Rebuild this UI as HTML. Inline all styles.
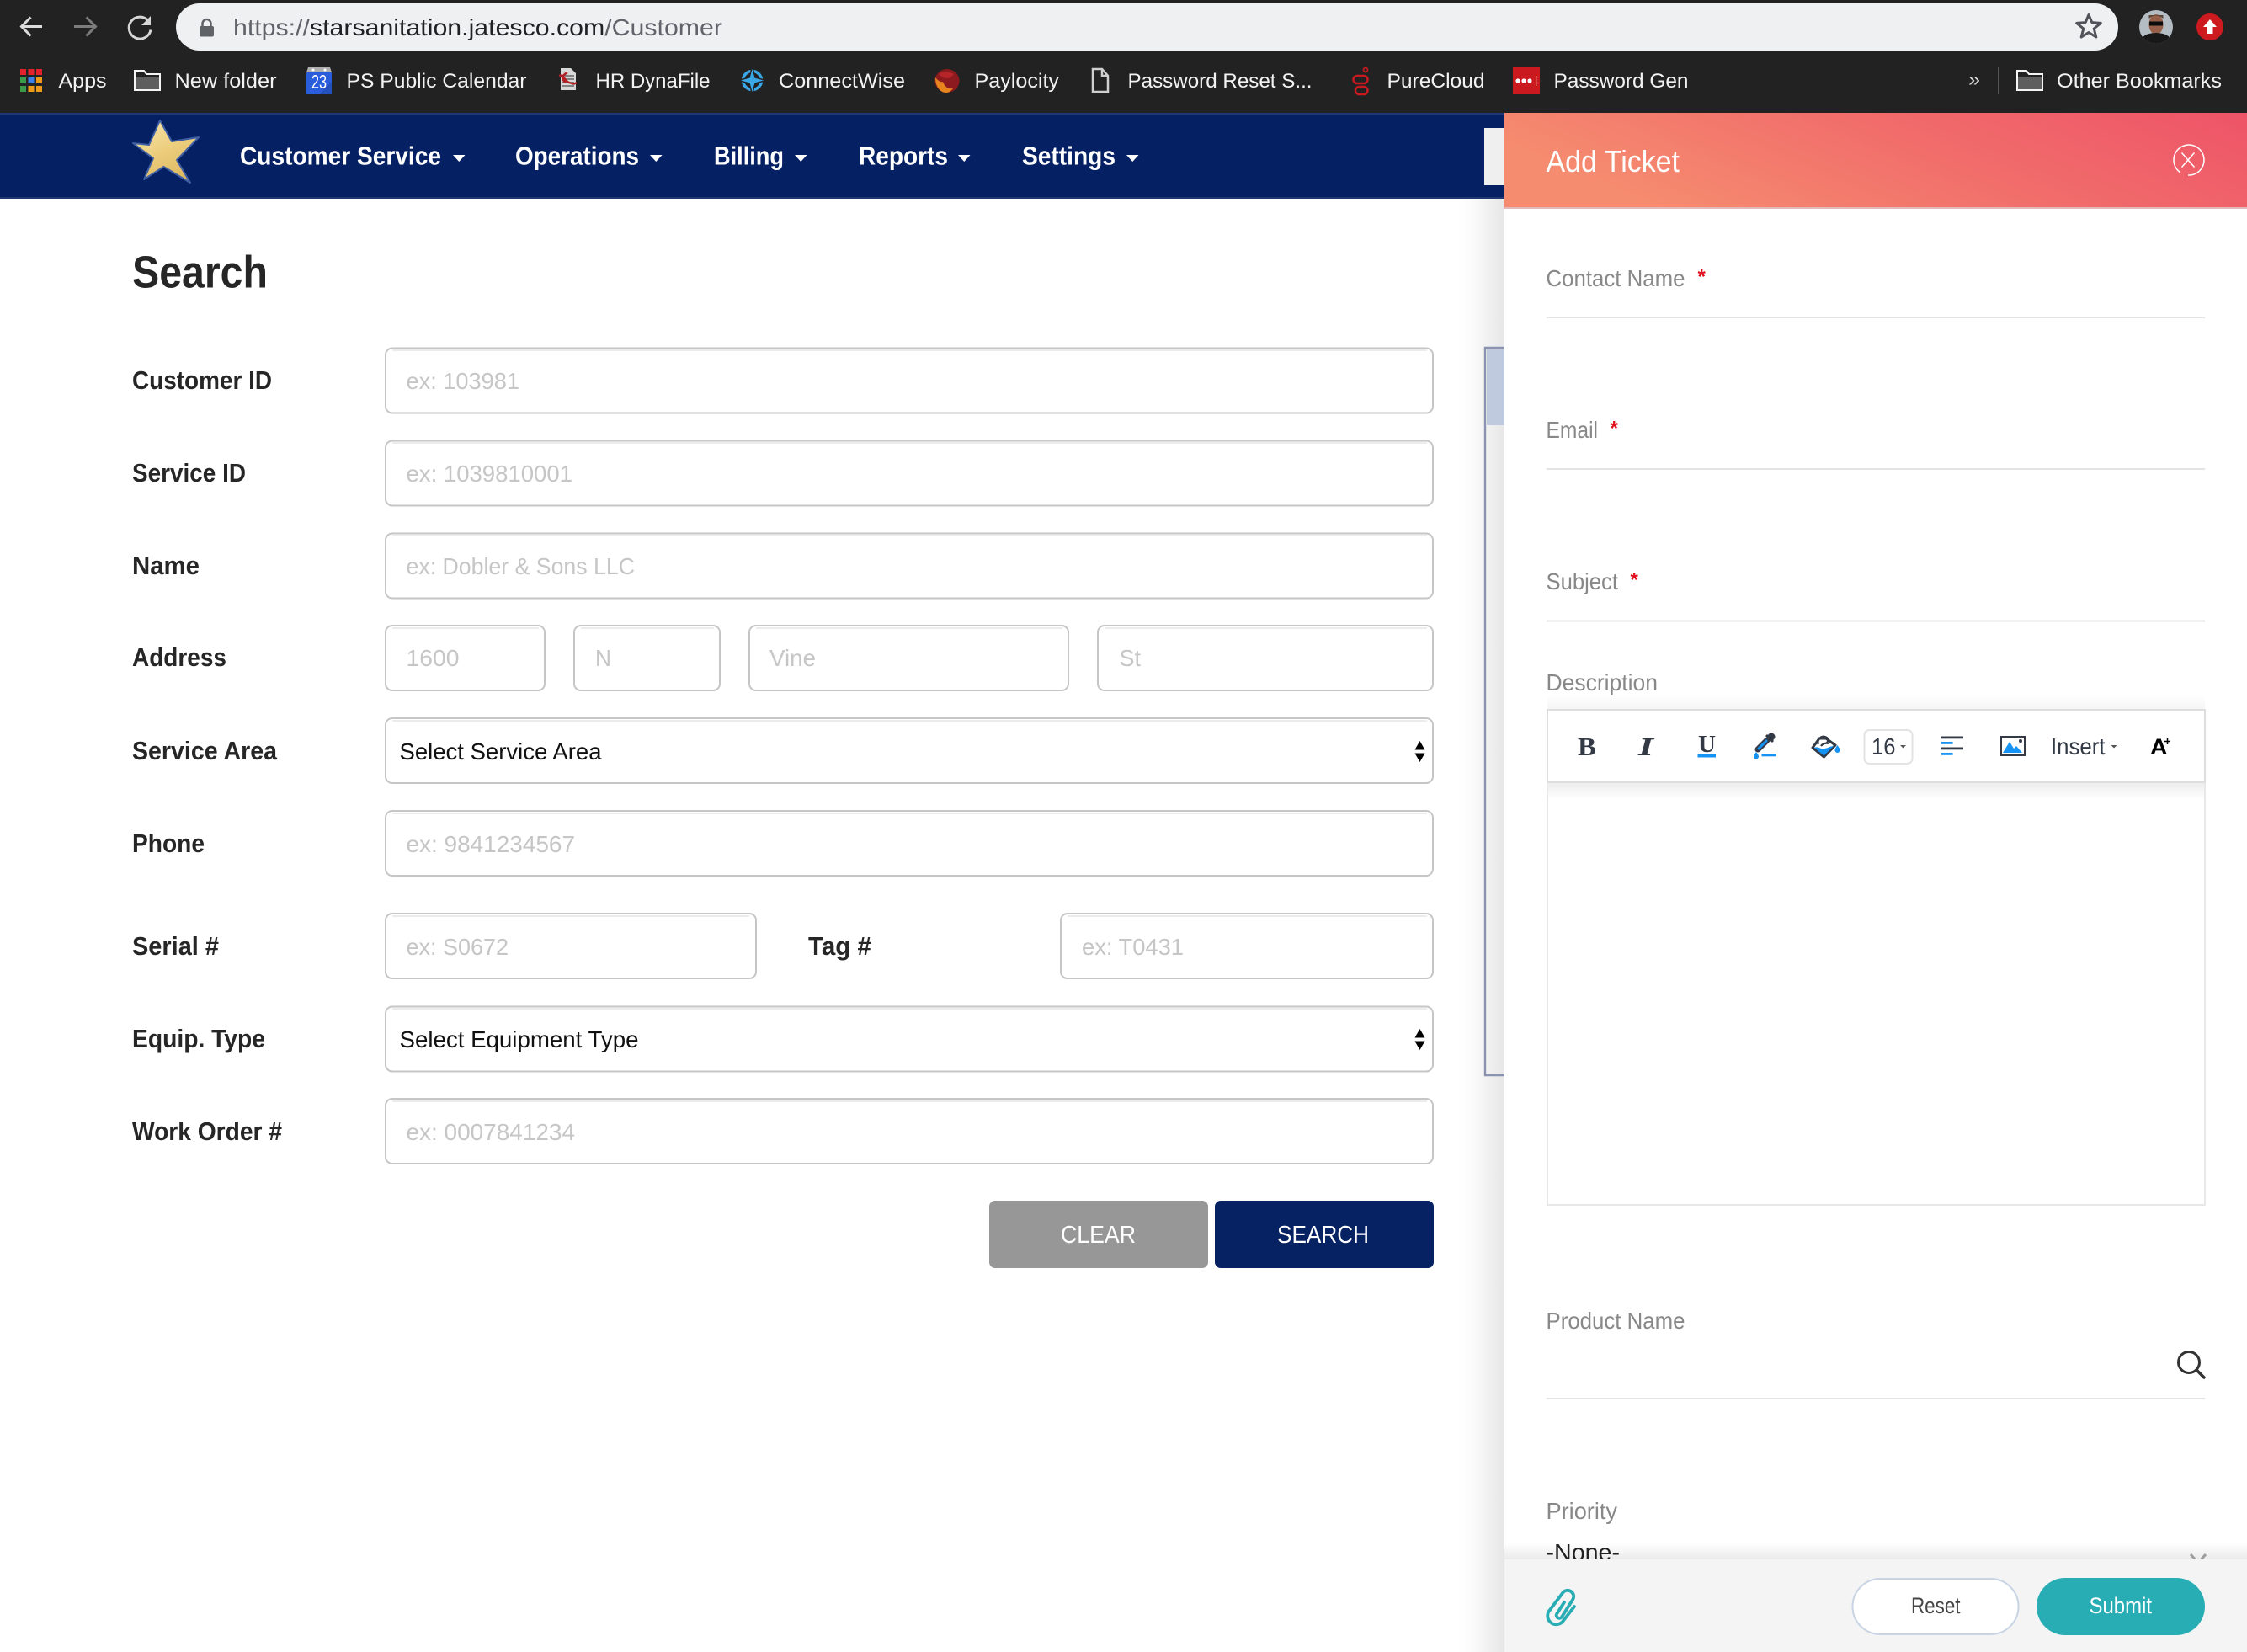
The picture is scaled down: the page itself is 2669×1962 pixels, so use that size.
<!DOCTYPE html>
<html lang="en">
<head>
<meta charset="utf-8">
<title>Search</title>
<style>
html,body{margin:0;padding:0;width:2669px;height:1962px;overflow:hidden;background:#fff}
svg{display:block}
text{font-family:"Liberation Sans",sans-serif;white-space:pre}
.bm{font-size:24px;fill:#f2f2f2}
.nav{font-size:31px;font-weight:700;fill:#fff}
.lbl{font-size:31px;font-weight:700;fill:#262626}
.ph{font-size:28px;fill:#c6c6c6}
.sel{font-size:28px;fill:#111}
.btn{font-size:29px;fill:#fff}
.pl{font-size:28px;fill:#888}
.ast{font-size:24px;font-weight:700;fill:#e0101c}
.box{fill:#fff;stroke:#c6c6c6;stroke-width:2}
.ish{stroke:#ececec;stroke-width:2}
.ul{fill:#e3e3e3}
</style>
</head>
<body>
<svg xmlns="http://www.w3.org/2000/svg" width="2669" height="1962" viewBox="0 0 2669 1962">
<defs>
<linearGradient id="sh" x1="0" x2="1" y1="0" y2="0"><stop offset="0" stop-color="#fff"/><stop offset="0.3" stop-color="#fbfbfb"/><stop offset="1" stop-color="#e6e6e6"/></linearGradient>
<linearGradient id="hd" x1="0" x2="1" y1="0.3" y2="0"><stop offset="0" stop-color="#f58b6f"/><stop offset="0.5" stop-color="#f16d6b"/><stop offset="1" stop-color="#ee5468"/></linearGradient>
<linearGradient id="gold" x1="0.2" x2="0.7" y1="0" y2="1"><stop offset="0" stop-color="#f5e3a8"/><stop offset="0.5" stop-color="#eccd7c"/><stop offset="1" stop-color="#dcb860"/></linearGradient>
<linearGradient id="fs" x1="0" x2="0" y1="0" y2="1"><stop offset="0" stop-color="#000" stop-opacity="0"/><stop offset="1" stop-color="#000" stop-opacity="0.08"/></linearGradient>
<linearGradient id="ts" x1="0" x2="0" y1="0" y2="1"><stop offset="0" stop-color="#000" stop-opacity="0.07"/><stop offset="1" stop-color="#000" stop-opacity="0"/></linearGradient>
<clipPath id="av"><circle cx="2561" cy="32" r="20"/></clipPath>
</defs>

<!-- browser chrome -->
<rect width="2669" height="134" fill="#222"/>
<rect x="209" y="4" width="2307" height="56" rx="28" fill="#eff0f2"/>
<path d="M50 31.500H26M36.500 20.500L25.500 31.500l11 11" fill="none" stroke="#dcdcdc" stroke-width="3"/>
<path d="M88 31.500h25M102.500 20.500l11 11-11 11" fill="none" stroke="#7c7c7c" stroke-width="3"/>
<path d="M176 24.500a13 13 0 1 0 3 11" fill="none" stroke="#d6d6d6" stroke-width="3"/>
<path d="M179 19v11h-11z" fill="#d6d6d6"/>
<rect x="237" y="31" width="17" height="12.500" rx="2" fill="#5f6368"/>
<path d="M240.500 32v-4a5 5 0 0 1 10 0v4" fill="none" stroke="#5f6368" stroke-width="2.500"/>
<text x="277" y="42" font-size="28" textLength="581" lengthAdjust="spacingAndGlyphs" fill="#60646a">https://<tspan fill="#202124">starsanitation.jatesco.com</tspan>/Customer</text>
<polygon points="2481,17.500 2484.800,26.600 2495.300,27.400 2487.200,34 2489.800,44 2481,38.500 2472.200,44 2474.800,34 2466.700,27.400 2477.200,26.600" fill="none" stroke="#50545a" stroke-width="3" stroke-linejoin="round"/>
<g clip-path="url(#av)">
<rect x="2541" y="12" width="40" height="40" fill="#b4bcc4"/>
<ellipse cx="2561" cy="29" rx="8.500" ry="12" fill="#96604a"/>
<rect x="2553" y="25.500" width="16" height="5" fill="#0c0c0c"/>
<path d="M2552.500 22q8.500-7 17 0v-4h-17z" fill="#5a4636"/>
<path d="M2541 52q3-13 20-13t20 13z" fill="#181818"/>
</g>
<circle cx="2625" cy="32" r="16" fill="#cc1a1f"/>
<path d="M2625 23l8 9h-4.500v8h-7v-8H2617z" fill="#fff"/>

<!-- bookmarks -->
<g>
<rect x="24" y="82" width="7" height="7" fill="#e5222a"/><rect x="33.500" y="82" width="7" height="7" fill="#e5222a"/><rect x="43" y="82" width="7" height="7" fill="#e5222a"/>
<rect x="24" y="92" width="7" height="7" fill="#3c9a48"/><rect x="33.500" y="92" width="7" height="7" fill="#3b7fe8"/><rect x="43" y="92" width="7" height="7" fill="#f09a1a"/>
<rect x="24" y="102" width="7" height="7" fill="#3c9a48"/><rect x="33.500" y="102" width="7" height="7" fill="#f09a1a"/><rect x="43" y="102" width="7" height="7" fill="#f09a1a"/>
</g>
<text class="bm" x="69.500" y="104" textLength="57" lengthAdjust="spacingAndGlyphs">Apps</text>
<path d="M160 107V84h11l3 4h16v19z" fill="#222" stroke="#f4f4f4" stroke-width="2"/><rect x="161" y="92" width="28" height="14" fill="#5e5e5e"/>
<text class="bm" x="207.500" y="104" textLength="121" lengthAdjust="spacingAndGlyphs">New folder</text>
<rect x="364" y="86" width="30" height="26" rx="1" fill="#2a5ddc"/><path d="M379 112h15V97z" fill="#2450bd"/><path d="M366 80h26l2 6h-30z" fill="#b0b0b0"/><circle cx="372" cy="83" r="1.500" fill="#fff"/><circle cx="386" cy="83" r="1.500" fill="#fff"/>
<text x="370" y="105" font-size="23" fill="#fff" textLength="18" lengthAdjust="spacingAndGlyphs">23</text>
<text class="bm" x="411.500" y="104" textLength="214" lengthAdjust="spacingAndGlyphs">PS Public Calendar</text>
<path d="M666 81h12l6 6v20h-18z" fill="#d8d8d8"/><path d="M668 90h14M668 94h14M668 98h14M668 102h14" stroke="#666" stroke-width="1.500"/><path d="M664 90c6-2 6 6 12 8s6 2 9 0M674 86c-7 4-8 8-2 12" fill="none" stroke="#b02024" stroke-width="2.500"/>
<text class="bm" x="707.500" y="104" textLength="136" lengthAdjust="spacingAndGlyphs">HR DynaFile</text>
<circle cx="893.500" cy="95.500" r="11" fill="none" stroke="#3aa7e6" stroke-width="3.500"/>
<polygon points="893.500,79 897,92 910,95.500 897,99 893.500,112 890,99 877,95.500 890,92" fill="#3aa7e6" stroke="#222" stroke-width="1.500"/>
<text class="bm" x="925" y="104" textLength="150" lengthAdjust="spacingAndGlyphs">ConnectWise</text>
<ellipse cx="1125" cy="96" rx="14.500" ry="14" fill="#8c1a1e"/><path d="M1111 92c0 10 5 18 13 18 3 0 6-2 8-5-6 1-10-2-12-8-2 1-6-1-9-5z" fill="#e8841e"/><path d="M1115 88q8-6 18 0-7 10-18 0z" fill="#b6252a"/>
<text class="bm" x="1157.500" y="104" textLength="100.500" lengthAdjust="spacingAndGlyphs">Paylocity</text>
<path d="M1298 82h11l7 8v19h-18zM1309 82v8h7" fill="none" stroke="#cfcfcf" stroke-width="2.500"/>
<text class="bm" x="1339.500" y="104" textLength="219" lengthAdjust="spacingAndGlyphs">Password Reset S...</text>
<circle cx="1622" cy="83" r="2.500" fill="none" stroke="#c8191f" stroke-width="1.800"/><rect x="1607.500" y="90" width="17" height="9" rx="4.500" fill="none" stroke="#c8191f" stroke-width="2.500"/><rect x="1610" y="103" width="14.500" height="9" rx="4.500" fill="none" stroke="#c8191f" stroke-width="2.500"/>
<text class="bm" x="1647.500" y="104" textLength="116" lengthAdjust="spacingAndGlyphs">PureCloud</text>
<rect x="1797" y="80" width="32" height="32" fill="#cb1a1f"/><circle cx="1803" cy="96" r="2.600" fill="#fff"/><circle cx="1810" cy="96" r="2.600" fill="#fff"/><circle cx="1817" cy="96" r="2.600" fill="#fff"/><rect x="1824" y="90" width="1.200" height="12" fill="#fff"/>
<text class="bm" x="1845.500" y="104" textLength="160" lengthAdjust="spacingAndGlyphs">Password Gen</text>
<text x="2338" y="102" font-size="24" fill="#d8d8d8" textLength="14" lengthAdjust="spacingAndGlyphs">»</text>
<rect x="2373" y="80" width="1.500" height="32" fill="#555"/>
<path d="M2396 107V84h11l3 4h16v19z" fill="#222" stroke="#f4f4f4" stroke-width="2"/><rect x="2397" y="92" width="28" height="14" fill="#5e5e5e"/>
<text class="bm" x="2443" y="104" textLength="196" lengthAdjust="spacingAndGlyphs">Other Bookmarks</text>

<!-- app nav -->
<rect y="134" width="1790" height="102" fill="#052163"/>
<rect y="134" width="1790" height="2" fill="#1f3875"/>
<rect y="234" width="1790" height="2" fill="#1f3875"/>
<polygon points="190,143 204,168 236,163 210,190 226,217 194.500,198 171,213 182,188 158,170 177,172" fill="url(#gold)" stroke="#3f5fa5" stroke-width="2" stroke-linejoin="round"/>
<text class="nav" x="285" y="195.500" textLength="239" lengthAdjust="spacingAndGlyphs">Customer Service</text>
<path d="M538 184h14.500l-7.250 8z" fill="#fff"/>
<text class="nav" x="612" y="195.500" textLength="147" lengthAdjust="spacingAndGlyphs">Operations</text>
<path d="M772 184h14.500l-7.250 8z" fill="#fff"/>
<text class="nav" x="848" y="195.500" textLength="83" lengthAdjust="spacingAndGlyphs">Billing</text>
<path d="M944 184h14.500l-7.250 8z" fill="#fff"/>
<text class="nav" x="1020" y="195.500" textLength="106" lengthAdjust="spacingAndGlyphs">Reports</text>
<path d="M1138 184h14.500l-7.250 8z" fill="#fff"/>
<text class="nav" x="1214" y="195.500" textLength="111" lengthAdjust="spacingAndGlyphs">Settings</text>
<path d="M1338 184h14.500l-7.250 8z" fill="#fff"/>

<!-- shadow behind panel -->
<rect x="1732" y="236" width="55" height="1726" fill="url(#sh)"/>
<rect x="1763" y="152" width="24" height="68" fill="#efefef"/>
<rect x="1766" y="415" width="21" height="90" fill="#c0cade"/>
<path d="M1787 413H1764V1277H1787" fill="none" stroke="#8a93b0" stroke-width="2.400"/>

<!-- search form -->
<text x="157" y="341.500" font-size="54" font-weight="700" fill="#262626" textLength="161" lengthAdjust="spacingAndGlyphs">Search</text>

<text class="lbl" x="157" y="462" textLength="166" lengthAdjust="spacingAndGlyphs">Customer ID</text>
<rect class="box" x="458" y="413.500" width="1244" height="77" rx="8"/><path class="ish" d="M466 416H1695"/>
<text class="ph" x="482.500" y="462" textLength="134.500" lengthAdjust="spacingAndGlyphs">ex: 103981</text>

<text class="lbl" x="157" y="572" textLength="135" lengthAdjust="spacingAndGlyphs">Service ID</text>
<rect class="box" x="458" y="523.500" width="1244" height="77" rx="8"/><path class="ish" d="M466 526H1695"/>
<text class="ph" x="482.500" y="572" textLength="197.500" lengthAdjust="spacingAndGlyphs">ex: 1039810001</text>

<text class="lbl" x="157" y="682" textLength="80" lengthAdjust="spacingAndGlyphs">Name</text>
<rect class="box" x="458" y="633.500" width="1244" height="77" rx="8"/><path class="ish" d="M466 636H1695"/>
<text class="ph" x="482.500" y="682" textLength="271.500" lengthAdjust="spacingAndGlyphs">ex: Dobler &amp; Sons LLC</text>

<text class="lbl" x="157" y="791" textLength="112" lengthAdjust="spacingAndGlyphs">Address</text>
<rect class="box" x="458" y="743" width="189" height="77" rx="8"/><path class="ish" d="M466 746H640"/>
<text class="ph" x="482.500" y="791" textLength="63" lengthAdjust="spacingAndGlyphs">1600</text>
<rect class="box" x="682" y="743" width="173" height="77" rx="8"/><path class="ish" d="M690 746H848"/>
<text class="ph" x="707" y="791" textLength="19" lengthAdjust="spacingAndGlyphs">N</text>
<rect class="box" x="890" y="743" width="379" height="77" rx="8"/><path class="ish" d="M898 746H1262"/>
<text class="ph" x="914" y="791" textLength="55" lengthAdjust="spacingAndGlyphs">Vine</text>
<rect class="box" x="1304" y="743" width="398" height="77" rx="8"/><path class="ish" d="M1312 746H1695"/>
<text class="ph" x="1329.500" y="791" textLength="25.500" lengthAdjust="spacingAndGlyphs">St</text>

<text class="lbl" x="157" y="902" textLength="172" lengthAdjust="spacingAndGlyphs">Service Area</text>
<rect class="box" x="458" y="853" width="1244" height="77" rx="8"/><path class="ish" d="M466 856H1695"/>
<text class="sel" x="474.500" y="902" textLength="240" lengthAdjust="spacingAndGlyphs">Select Service Area</text>
<path d="M1686.500 880l6 10.500h-12zM1686.500 905l6-10.500h-12z" fill="#000"/>

<text class="lbl" x="157" y="1012" textLength="86" lengthAdjust="spacingAndGlyphs">Phone</text>
<rect class="box" x="458" y="963" width="1244" height="77" rx="8"/><path class="ish" d="M466 966H1695"/>
<text class="ph" x="482.500" y="1012" textLength="200.500" lengthAdjust="spacingAndGlyphs">ex: 9841234567</text>

<text class="lbl" x="157" y="1134" textLength="103" lengthAdjust="spacingAndGlyphs">Serial #</text>
<rect class="box" x="458" y="1085" width="440" height="77" rx="8"/><path class="ish" d="M466 1088H890"/>
<text class="ph" x="482.500" y="1134" textLength="121.500" lengthAdjust="spacingAndGlyphs">ex: S0672</text>
<text class="lbl" x="960" y="1134" textLength="75" lengthAdjust="spacingAndGlyphs">Tag #</text>
<rect class="box" x="1260" y="1085" width="442" height="77" rx="8"/><path class="ish" d="M1268 1088H1695"/>
<text class="ph" x="1285" y="1134" textLength="121" lengthAdjust="spacingAndGlyphs">ex: T0431</text>

<text class="lbl" x="157" y="1244" textLength="158" lengthAdjust="spacingAndGlyphs">Equip. Type</text>
<rect class="box" x="458" y="1195.500" width="1244" height="77" rx="8"/><path class="ish" d="M466 1198H1695"/>
<text class="sel" x="474.500" y="1244" textLength="284" lengthAdjust="spacingAndGlyphs">Select Equipment Type</text>
<path d="M1686.500 1222l6 10.500h-12zM1686.500 1247l6-10.500h-12z" fill="#000"/>

<text class="lbl" x="157" y="1354" textLength="178" lengthAdjust="spacingAndGlyphs">Work Order #</text>
<rect class="box" x="458" y="1305" width="1244" height="77" rx="8"/><path class="ish" d="M466 1308H1695"/>
<text class="ph" x="482.500" y="1354" textLength="200.500" lengthAdjust="spacingAndGlyphs">ex: 0007841234</text>

<rect x="1175" y="1426" width="260" height="80" rx="7" fill="#979797"/>
<text class="btn" x="1260" y="1476" textLength="89" lengthAdjust="spacingAndGlyphs">CLEAR</text>
<rect x="1443" y="1426" width="260" height="80" rx="7" fill="#062263"/>
<text class="btn" x="1517" y="1476" textLength="109" lengthAdjust="spacingAndGlyphs">SEARCH</text>

<!-- add ticket panel -->
<rect x="1787" y="134" width="882" height="1828" fill="#fff"/>
<rect x="1787" y="134" width="882" height="112" fill="url(#hd)"/>
<rect x="1787" y="246" width="882" height="2" fill="#e3b9b9"/>
<text x="1836.500" y="204" font-size="36" fill="#fff" textLength="158.500" lengthAdjust="spacingAndGlyphs">Add Ticket</text>
<path d="M2590 205a18 18 0 1 1 9 3" fill="none" stroke="#fff" stroke-width="1.500"/>
<path d="M2591.500 181.500l15 17M2606.500 181.500l-15 17" stroke="#fff" stroke-width="1.500"/>

<text class="pl" x="1836.500" y="340" textLength="165" lengthAdjust="spacingAndGlyphs">Contact Name</text>
<text class="ast" x="2016.500" y="336.500">*</text>
<rect class="ul" x="1837" y="376" width="782" height="2"/>

<text class="pl" x="1836.500" y="520" textLength="61.500" lengthAdjust="spacingAndGlyphs">Email</text>
<text class="ast" x="1912.500" y="516.500">*</text>
<rect class="ul" x="1837" y="556" width="782" height="2"/>

<text class="pl" x="1836.500" y="700" textLength="85.500" lengthAdjust="spacingAndGlyphs">Subject</text>
<text class="ast" x="1936.500" y="696.500">*</text>
<rect class="ul" x="1837" y="736.500" width="782" height="2"/>

<text class="pl" x="1836.500" y="820" textLength="132.500" lengthAdjust="spacingAndGlyphs">Description</text>

<!-- editor -->
<rect x="1838" y="929" width="781" height="502" fill="#fff" stroke="#e8e8e8" stroke-width="2"/>
<rect x="1839" y="930" width="779" height="20" fill="url(#ts)"/>
<rect x="1838" y="825" width="781" height="18" fill="url(#fs)" opacity="0.5"/>
<rect x="1838" y="843" width="781" height="86" fill="#fff" stroke="#dedede" stroke-width="2"/>
<text x="1874" y="897" font-size="31" font-weight="700" fill="#333a45" style="font-family:'Liberation Serif',serif" textLength="22" lengthAdjust="spacingAndGlyphs">B</text>
<text x="1946" y="897" font-size="31" font-weight="700" font-style="italic" fill="#333a45" style="font-family:'Liberation Serif',serif" textLength="18" lengthAdjust="spacingAndGlyphs">I</text>
<text x="2017" y="893" font-size="28" font-weight="700" fill="#333a45" style="font-family:'Liberation Serif',serif" textLength="21" lengthAdjust="spacingAndGlyphs">U</text>
<rect x="2016.500" y="896" width="21.500" height="3.500" fill="#1593f5"/>
<path d="M2088 890l11-11" stroke="#333a45" stroke-width="7" stroke-linecap="round"/>
<path d="M2089 889l9-9" stroke="#1593f5" stroke-width="3" stroke-linecap="round"/>
<circle cx="2104" cy="875" r="4.500" fill="#333a45"/>
<path d="M2098 873l8 8" stroke="#333a45" stroke-width="3"/>
<path d="M2086 893c2 3 3 4 3 5.500a3 3 0 0 1-6 0c0-1.500 1-2.500 3-5.500z" fill="#1593f5"/>
<rect x="2092.500" y="895.500" width="17.500" height="2.800" fill="#1593f5"/>
<path d="M2153 888L2161 877h8L2180 885 2166.500 899z" fill="#fff" stroke="#333a45" stroke-width="3" stroke-linejoin="round"/>
<path d="M2155 888c6-2 6 2 12 1s7-3 11-3l-11.500 11.500z" fill="#1593f5"/>
<path d="M2159.500 884c-1-7 4-10 8-9s5 4 2 8M2163 886c2-3 6-4 9-3" fill="none" stroke="#333a45" stroke-width="2.200"/>
<path d="M2182.500 885c2 3 3 4 3 6a3 3 0 0 1-6 0c0-2 1-3 3-6z" fill="#1593f5"/>
<rect x="2214.500" y="867" width="57" height="40" rx="6" fill="#fff" stroke="#e3e3e3" stroke-width="2"/>
<text x="2223" y="896" font-size="28" fill="#333a45" textLength="28.500" lengthAdjust="spacingAndGlyphs">16</text>
<path d="M2257 885h7l-3.500 3.500z" fill="#555"/>
<rect x="2306" y="874.500" width="26" height="2.800" fill="#333a45"/><rect x="2306" y="881" width="13.500" height="2.800" fill="#1593f5"/><rect x="2306" y="887.500" width="26" height="2.800" fill="#333a45"/><rect x="2306" y="894" width="13.500" height="2.800" fill="#1593f5"/>
<rect x="2377" y="875" width="28" height="22" fill="#fff" stroke="#333a45" stroke-width="2"/>
<path d="M2379 894l8-13 5 8 3-3 7 8z" fill="#1593f5"/><circle cx="2400" cy="880" r="2" fill="#333a45"/>
<text x="2436" y="896" font-size="28" fill="#333a45" textLength="64.500" lengthAdjust="spacingAndGlyphs">Insert</text>
<path d="M2507.500 885h7l-3.500 3.500z" fill="#555"/>
<text x="2554" y="896" font-size="27" font-weight="700" fill="#000" textLength="20.500" lengthAdjust="spacingAndGlyphs">A</text>
<path d="M2574.500 877v7M2571 880.500h7" stroke="#000" stroke-width="1.500"/>

<text class="pl" x="1836.500" y="1578" textLength="165" lengthAdjust="spacingAndGlyphs">Product Name</text>
<circle cx="2600" cy="1618" r="12.500" fill="none" stroke="#333" stroke-width="3"/>
<path d="M2609 1627l9 9" stroke="#333" stroke-width="3.500" stroke-linecap="round"/>
<rect class="ul" x="1837" y="1660" width="782" height="2"/>

<text class="pl" x="1836.500" y="1804" textLength="84.500" lengthAdjust="spacingAndGlyphs">Priority</text>
<text x="1836.500" y="1853" font-size="28" fill="#222" textLength="87.500" lengthAdjust="spacingAndGlyphs">-None-</text>
<path d="M2602 1846l9 10 9-10" fill="none" stroke="#a8a8a8" stroke-width="3"/>

<!-- footer -->
<rect x="1787" y="1832" width="882" height="20" fill="url(#fs)"/>
<rect x="1787" y="1852" width="882" height="110" fill="#f4f4f4"/>
<path d="M1858 1903L1849 1917a3.500 3.500 0 0 0 6 3.500L1868 1900a7 7 0 0 0-12-8L1841 1912a10 10 0 0 0 15 14L1870 1908" fill="none" stroke="#29adb5" stroke-width="3.800" stroke-linecap="round"/>
<rect x="2200.500" y="1875" width="197" height="66" rx="33" fill="#fff" stroke="#c8d4e4" stroke-width="2"/>
<text x="2270" y="1916" font-size="27" fill="#444" textLength="58.500" lengthAdjust="spacingAndGlyphs">Reset</text>
<rect x="2419" y="1874" width="200" height="68" rx="34" fill="#29adb5"/>
<text x="2481.500" y="1916" font-size="27" fill="#fff" textLength="74.500" lengthAdjust="spacingAndGlyphs">Submit</text>
</svg>
</body>
</html>
